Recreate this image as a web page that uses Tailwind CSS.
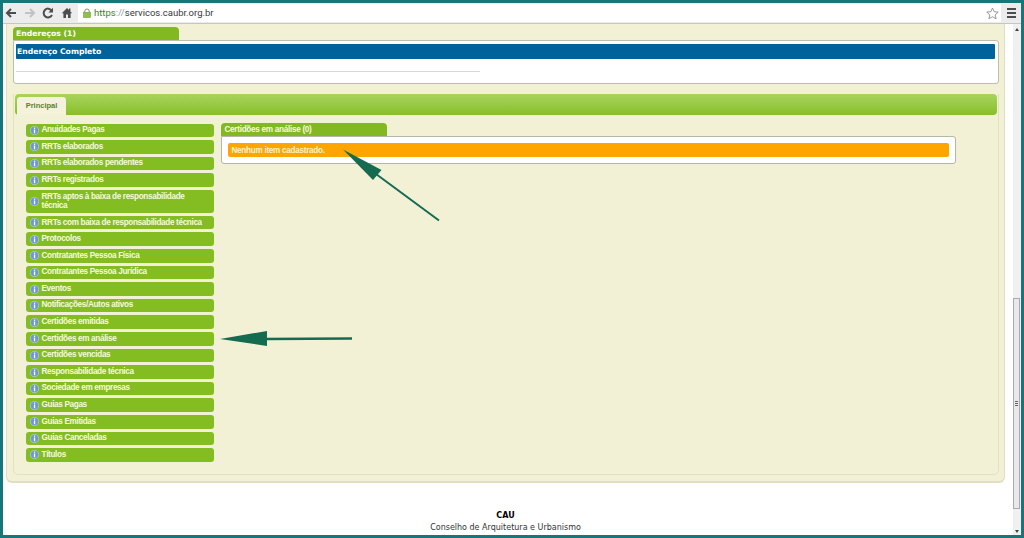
<!DOCTYPE html>
<html lang="pt-BR">
<head>
    <meta charset="UTF-8">
    <title>CAU - Certidões em análise</title>
    <script src="https://cdn.jsdelivr.net/npm/@tailwindcss/browser@4"></script>
</head>
<body class="relative w-[1024px] h-[538px] overflow-hidden bg-[#17767a] pt-[3px] pl-[3px] pr-[3px] pb-[3px] font-['Liberation_Sans',sans-serif]">
    <svg class="hidden">
        <symbol id="info" viewBox="0 0 9 9">
            <circle cx="4.5" cy="4.5" r="4.2" fill="#6f97d2" stroke="#c4d6ea" stroke-width="0.6" />
            <rect x="3.9" y="1.6" width="1.3" height="1.2" fill="#fff" />
            <rect x="3.9" y="3.5" width="1.3" height="3.7" fill="#fff" />
        </symbol>
    </svg>

    <div class="flex flex-col w-[1018px] h-[532px] bg-white overflow-hidden">
        <!-- browser toolbar -->
        <div class="flex items-center h-[21px] shrink-0 bg-[#ececec] border-b border-[#c6c6c6]">
            <div class="flex items-center w-[75px] shrink-0">
                <svg class="w-[12px] h-[12px] ml-[2px]" viewBox="0 0 12 12"><path d="M11 6H3M6 2L2 6l4 4" fill="none" stroke="#4d4d4d" stroke-width="2" /></svg>
                <svg class="w-[12px] h-[12px] ml-[7px]" viewBox="0 0 12 12"><path d="M1 6h8M6 2l4 4-4 4" fill="none" stroke="#c2c2c2" stroke-width="2" /></svg>
                <svg class="w-[12px] h-[12px] ml-[6px]" viewBox="0 0 12 12"><path d="M9.6 3.4A4.4 4.4 0 1 0 10 8" fill="none" stroke="#4d4d4d" stroke-width="2" /><path d="M11 0.8V5.4H6.4z" fill="#4d4d4d" /></svg>
                <svg class="w-[12px] h-[12px] ml-[7px]" viewBox="0 0 12 12"><path d="M6 1L0.8 6.2H2.4V11H5V7.6H7V11H9.6V6.2H11.2L9.4 4.4V1.6H8V3z" fill="#4d4d4d" /></svg>
            </div>
            <div class="flex items-center flex-1 h-[18px] bg-white pl-[5px]">
                <svg class="w-[8px] h-[10px] shrink-0" viewBox="0 0 9 11"><path d="M2 5V3.4a2.5 2.5 0 0 1 5 0V5" fill="none" stroke="#9a9a7c" stroke-width="1.2" /><rect x="0.5" y="4.6" width="8" height="6" fill="#8fbf4d" stroke="#6f9a36" stroke-width="0.6" /></svg>
                <span class="ml-[3px] text-[9.500px] leading-none font-['Roboto',sans-serif] text-[#3a3a3a]"><span class="text-[#2d8a2d]">https</span><span class="text-[#9a9a9a]">://</span>servicos.caubr.org.br</span>
                <svg class="w-[13px] h-[13px] ml-auto mr-[2px]" viewBox="0 0 13 13"><path d="M6.5 1l1.7 3.7 4 .4-3 2.7.9 4-3.6-2.1-3.6 2.1.9-4-3-2.7 4-.4z" fill="#fff" stroke="#8c8c8c" stroke-width="0.9" /></svg>
            </div>
            <div class="flex flex-col gap-[2px] w-[20px] shrink-0 items-center">
                <div class="w-[9px] h-[2px] bg-[#4d4d4d]"></div>
                <div class="w-[9px] h-[2px] bg-[#4d4d4d]"></div>
                <div class="w-[9px] h-[2px] bg-[#4d4d4d]"></div>
            </div>
        </div>

        <div class="flex flex-1 min-h-0">
            <main class="flex-1 min-w-0 pl-[3px]">
                <!-- outer panel -->
                <div class="h-[459px] bg-[#f2f0d5] border-b-2 border-r border-l border-[#e0dfc4] rounded-b-[6px] pl-[6px] pr-[5px] pt-[3px]">
                    <div class="w-[166px] h-[13px] rounded-t-[4px] bg-[#82b923] pl-[3px] text-[7.700px] leading-[14px] font-bold text-white font-['DejaVu_Sans',sans-serif]">Endereços (1)</div>
                    <div class="h-[44px] bg-white border border-[#bdbdb0] rounded-b-[3px] rounded-tr-[3px] pt-[3px] pl-[2px] pr-[3px]">
                        <div class="h-[15px] bg-[#00629b] rounded-[1px] pl-[1px] text-[7.700px] leading-[15px] font-bold text-white font-['DejaVu_Sans',sans-serif]">Endereço Completo</div>
                        <div class="w-[464px] h-[1px] mt-[12px] bg-[#d8d8d8]"></div>
                    </div>

                    <!-- tabs panel -->
                    <div class="h-[381px] mt-[10px] bg-[#f2f0d5] border border-t-0 border-[#e3e2c0] rounded-b-[5px]">
                        <div class="flex items-end h-[21px] mx-[1px] pl-[2px] rounded-[4px] bg-gradient-to-b from-[#a8d45c] to-[#88bf24]">
                            <div class="w-[49px] h-[18px] bg-[#f4f2db] rounded-t-[3px] text-center text-[7.500px] leading-[18px] font-bold text-[#5d7f2c]">Principal</div>
                        </div>

                        <div class="flex items-start pt-[8.500px] pl-[11.500px]">
                            <!-- menu -->
                            <ul class="flex flex-col w-[188.500px] shrink-0 gap-[3px] text-[8.200px] tracking-[-0.35px] font-bold text-[#f6f9df]">
                                <li class="flex items-center h-[13.6px] px-[4px] gap-[3px] bg-[#84bd22] rounded-[3px]"><svg class="w-[9px] h-[9px] shrink-0"><use href="#info" /></svg>Anuidades Pagas</li>
                                <li class="flex items-center h-[13.6px] px-[4px] gap-[3px] bg-[#84bd22] rounded-[3px]"><svg class="w-[9px] h-[9px] shrink-0"><use href="#info" /></svg>RRTs elaborados</li>
                                <li class="flex items-center h-[13.6px] px-[4px] gap-[3px] bg-[#84bd22] rounded-[3px]"><svg class="w-[9px] h-[9px] shrink-0"><use href="#info" /></svg>RRTs elaborados pendentes</li>
                                <li class="flex items-center h-[13.6px] px-[4px] gap-[3px] bg-[#84bd22] rounded-[3px]"><svg class="w-[9px] h-[9px] shrink-0"><use href="#info" /></svg>RRTs registrados</li>
                                <li class="flex items-center h-[23px] px-[4px] gap-[3px] bg-[#84bd22] rounded-[3px] leading-[9.500px]"><svg class="w-[9px] h-[9px] shrink-0"><use href="#info" /></svg><span>RRTs aptos à baixa de responsabilidade técnica</span></li>
                                <li class="flex items-center h-[13.6px] px-[4px] gap-[3px] bg-[#84bd22] rounded-[3px] whitespace-nowrap"><svg class="w-[9px] h-[9px] shrink-0"><use href="#info" /></svg>RRTs com baixa de responsabilidade técnica</li>
                                <li class="flex items-center h-[13.6px] px-[4px] gap-[3px] bg-[#84bd22] rounded-[3px]"><svg class="w-[9px] h-[9px] shrink-0"><use href="#info" /></svg>Protocolos</li>
                                <li class="flex items-center h-[13.6px] px-[4px] gap-[3px] bg-[#84bd22] rounded-[3px]"><svg class="w-[9px] h-[9px] shrink-0"><use href="#info" /></svg>Contratantes Pessoa Física</li>
                                <li class="flex items-center h-[13.6px] px-[4px] gap-[3px] bg-[#84bd22] rounded-[3px]"><svg class="w-[9px] h-[9px] shrink-0"><use href="#info" /></svg>Contratantes Pessoa Jurídica</li>
                                <li class="flex items-center h-[13.6px] px-[4px] gap-[3px] bg-[#84bd22] rounded-[3px]"><svg class="w-[9px] h-[9px] shrink-0"><use href="#info" /></svg>Eventos</li>
                                <li class="flex items-center h-[13.6px] px-[4px] gap-[3px] bg-[#84bd22] rounded-[3px]"><svg class="w-[9px] h-[9px] shrink-0"><use href="#info" /></svg>Notificações/Autos ativos</li>
                                <li class="flex items-center h-[13.6px] px-[4px] gap-[3px] bg-[#84bd22] rounded-[3px]"><svg class="w-[9px] h-[9px] shrink-0"><use href="#info" /></svg>Certidões emitidas</li>
                                <li class="flex items-center h-[13.6px] px-[4px] gap-[3px] bg-[#84bd22] rounded-[3px]"><svg class="w-[9px] h-[9px] shrink-0"><use href="#info" /></svg>Certidões em análise</li>
                                <li class="flex items-center h-[13.6px] px-[4px] gap-[3px] bg-[#84bd22] rounded-[3px]"><svg class="w-[9px] h-[9px] shrink-0"><use href="#info" /></svg>Certidões vencidas</li>
                                <li class="flex items-center h-[13.6px] px-[4px] gap-[3px] bg-[#84bd22] rounded-[3px]"><svg class="w-[9px] h-[9px] shrink-0"><use href="#info" /></svg>Responsabilidade técnica</li>
                                <li class="flex items-center h-[13.6px] px-[4px] gap-[3px] bg-[#84bd22] rounded-[3px]"><svg class="w-[9px] h-[9px] shrink-0"><use href="#info" /></svg>Sociedade em empresas</li>
                                <li class="flex items-center h-[13.6px] px-[4px] gap-[3px] bg-[#84bd22] rounded-[3px]"><svg class="w-[9px] h-[9px] shrink-0"><use href="#info" /></svg>Guias Pagas</li>
                                <li class="flex items-center h-[13.6px] px-[4px] gap-[3px] bg-[#84bd22] rounded-[3px]"><svg class="w-[9px] h-[9px] shrink-0"><use href="#info" /></svg>Guias Emitidas</li>
                                <li class="flex items-center h-[13.6px] px-[4px] gap-[3px] bg-[#84bd22] rounded-[3px]"><svg class="w-[9px] h-[9px] shrink-0"><use href="#info" /></svg>Guias Canceladas</li>
                                <li class="flex items-center h-[13.6px] px-[4px] gap-[3px] bg-[#84bd22] rounded-[3px]"><svg class="w-[9px] h-[9px] shrink-0"><use href="#info" /></svg>Títulos</li>
                            </ul>

                            <!-- content -->
                            <div class="w-[735px] ml-[7px] -mt-[0.500px]">
                                <div class="w-[166px] h-[13px] rounded-t-[4px] bg-[#82b923] pl-[3.500px] text-[8.200px] tracking-[-0.3px] leading-[13px] font-bold text-[#f6f9df]">Certidões em análise (0)</div>
                                <div class="h-[28px] bg-white border border-[#b5b5a8] rounded-b-[3px] rounded-tr-[3px] pt-[6px] px-[6px]">
                                    <div class="h-[14px] bg-[#ffa500] rounded-[2px] pl-[3.500px] text-[8.200px] tracking-[-0.3px] leading-[15px] font-bold text-[#fdf3cf]">Nenhum item cadastrado.</div>
                                </div>
                            </div>
                        </div>
                    </div>
                </div>

                <footer class="mt-[27px] text-center text-[8px] text-[#333] font-['DejaVu_Sans',sans-serif] leading-[12px]">
                    <p class="font-bold text-black">CAU</p>
                    <p>Conselho de Arquitetura e Urbanismo</p>
                </footer>
            </main>

            <!-- scrollbar -->
            <div class="flex w-[16px] shrink-0">
                <div class="w-[8px] bg-white"></div>
                <div class="relative w-[8px] bg-[#f0f0f0] text-[#444]">
                    <div class="absolute top-[4px] left-[2px] w-0 h-0 border-x-[2px] border-x-transparent border-b-[3px] border-b-[#444]"></div>
                    <div class="absolute top-[274px] left-0 w-[7px] h-[211px] bg-[#e8e8ee] border border-[#a9a9b0] flex flex-col items-center justify-center gap-[1px]">
                        <div class="w-[3px] h-[1px] bg-[#666]"></div>
                        <div class="w-[3px] h-[1px] bg-[#666]"></div>
                        <div class="w-[3px] h-[1px] bg-[#666]"></div>
                    </div>
                    <div class="absolute bottom-[2px] left-[2px] w-0 h-0 border-x-[2px] border-x-transparent border-t-[3px] border-t-[#444]"></div>
                </div>
            </div>
        </div>
    </div>

    <!-- annotation arrows over the screenshot -->
    <svg class="absolute top-0 left-0 w-[1024px] h-[538px] pointer-events-none" viewBox="0 0 1024 538">
        <path d="M439 220.5L376 174" stroke="#156b4f" stroke-width="2" fill="none" />
        <path d="M343 149.5L381.500 170L373 180z" fill="#156b4f" />
        <path d="M352 338.500L266 339" stroke="#156b4f" stroke-width="2.500" fill="none" />
        <path d="M220 339L267 331V346z" fill="#156b4f" />
    </svg>
</body>
</html>
